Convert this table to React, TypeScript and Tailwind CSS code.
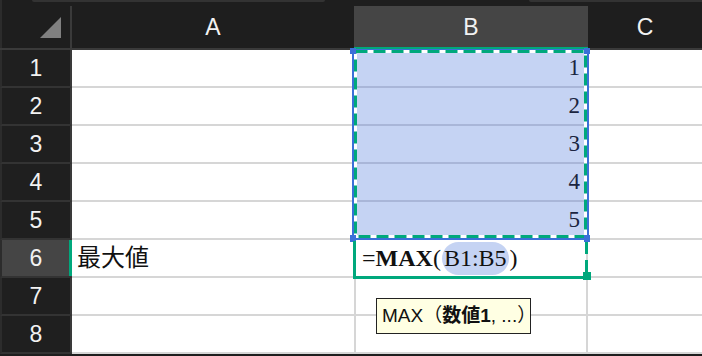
import React from "react";

const ROWS = [1, 2, 3, 4, 5, 6, 7, 8];

function RowHeader({ n }: { n: number }) {
  const active = n === 6;
  return (
    <div
      className={`relative flex h-[38px] w-[72px] shrink-0 items-center justify-center border-b-2 border-l-2 border-r-2 border-b-[#333333] border-l-[#2c2c2c] border-r-[#3a3a3a] text-[23px] text-[#f2f2f2] ${
        active ? "bg-[#454545]" : "bg-[#1f1f1f]"
      }`}
    >
      {n}
      {active && <div className="absolute right-[-2px] top-0 h-[36px] w-[3px] bg-[#00a87c]" />}
    </div>
  );
}

function SelectionMarks() {
  // marching-ants copy range around B1:B5 and the edit frame of B6
  return (
    <svg className="pointer-events-none absolute left-0 top-0" width={702} height={356}>
      {/* column B header indicator */}
      <rect x={354} y={47} width={234} height={3} fill="#00a87c" />
      {/* reference highlight frame */}
      <rect x={353} y={50} width={235} height={189} fill="none" stroke="#3b70d8" strokeWidth={2} />
      {/* marching ants */}
      <rect x={355.5} y={51.5} width={230} height={185} fill="none" stroke="#ffffff" strokeWidth={3} />
      <rect
        x={355.5}
        y={51.5}
        width={230}
        height={185}
        fill="none"
        stroke="#00a87c"
        strokeWidth={3}
        strokeDasharray="12 6"
      />
      {/* reference corner handles */}
      <rect x={350} y={48} width={6} height={6} fill="#3b70d8" />
      <rect x={584} y={48} width={6} height={6} fill="#3b70d8" />
      <rect x={350} y={235} width={6} height={7} fill="#3b70d8" />
      <rect x={584} y={235} width={6} height={7} fill="#3b70d8" />
      {/* active cell B6 */}
      <rect x={353} y={241} width={3} height={38} fill="#00a87c" />
      <rect x={353} y={276} width={234} height={3} fill="#00a87c" />
      <line x1={586.5} y1={242} x2={586.5} y2={276} stroke="#00a87c" strokeWidth={3} strokeDasharray="12 6" />
      <rect x={583} y={272} width={8} height={8} fill="#00a87c" />
    </svg>
  );
}

export default function App() {
  return (
    <div className="relative h-[356px] w-[702px] overflow-hidden bg-[#1e1e1e] font-['Liberation_Sans',sans-serif]">
      {/* top strip */}
      <div className="relative h-[6px] border-l-2 border-[#2c2c2c]">
        <div className="absolute left-[30px] top-0 h-[2px] w-[293px] rounded-b-[3px] bg-[#333333]" />
        <div className="absolute left-[527px] top-0 h-[2px] w-[175px] rounded-bl-[3px] bg-[#333333]" />
      </div>

      {/* column headers */}
      <div className="flex h-[44px] border-b-2 border-[#3a3a3a]">
        <div className="relative w-[72px] shrink-0 border-l-2 border-r-2 border-l-[#2c2c2c] border-r-[#3a3a3a]">
          <svg className="absolute left-[38px] top-[11px]" width={22} height={22} viewBox="0 0 22 22">
            <polygon points="21,0 21,21 0,21" fill="#808080" />
          </svg>
        </div>
        <div className="flex w-[282px] shrink-0 items-center justify-center text-[23px] text-[#f2f2f2]">A</div>
        <div className="flex w-[234px] shrink-0 items-center justify-center bg-[#454545] text-[23px] text-[#f2f2f2]">
          B
        </div>
        <div className="flex flex-1 items-center justify-center text-[23px] text-[#f2f2f2]">C</div>
      </div>

      {/* rows */}
      {ROWS.map((n) => {
        const inRange = n <= 5;
        return (
          <div key={n} className="flex">
            <RowHeader n={n} />
            <div className="flex h-[38px] w-[284px] shrink-0 items-center border-b-2 border-r-2 border-[#d6d6d6] bg-white pl-[5px] font-['Liberation_Serif','Noto_Sans_CJK_JP',serif] text-[24px] text-[#111111]">
              {n === 6 ? "最大値" : ""}
            </div>
            <div
              className={`flex h-[38px] w-[232px] shrink-0 items-center border-b-2 border-r-2 font-['Liberation_Serif',serif] text-[23px] ${
                inRange
                  ? "justify-end border-b-[#a9b6d8] border-r-[#d6d6d6] bg-[#c5d3f3] pr-[6px] text-[#1b2540]"
                  : "border-[#d6d6d6] bg-white pl-[6px] text-[#111111]"
              }`}
            >
              {inRange && n}
              {n === 6 && (
                <span className="flex items-center text-[24px]">
                  =<span className="font-['Liberation_Serif','DejaVu_Serif',serif] font-bold">MAX</span>(
                  <span className="mx-[1px] rounded-full bg-[#c5d3f3] px-[2px] leading-[33px]">B1:B5</span>)
                </span>
              )}
            </div>
            <div className="h-[38px] flex-1 border-b-2 border-[#d6d6d6] bg-white" />
          </div>
        );
      })}

      <SelectionMarks />

      {/* function hint */}
      <div className="absolute left-[376px] top-[298px] h-[36px] w-[155px] whitespace-nowrap border border-[#222222] bg-[#ffffe3] pl-[5px] font-['Liberation_Sans','Noto_Sans_CJK_JP',sans-serif] text-[19px] leading-[34px] text-[#111111]">
        MAX（<b>数値1</b>, ...）
      </div>
    </div>
  );
}
